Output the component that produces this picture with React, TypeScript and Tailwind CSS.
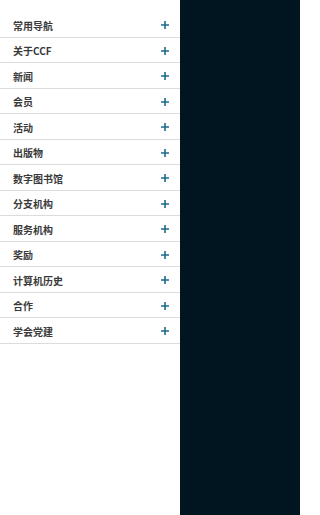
import React from 'react';

const items = [
  '常用导航',
  '关于CCF',
  '新闻',
  '会员',
  '活动',
  '出版物',
  '数字图书馆',
  '分支机构',
  '服务机构',
  '奖励',
  '计算机历史',
  '合作',
  '学会党建',
];

export default function App() {
  return (
    <div className="flex h-[515px] w-[300px] overflow-hidden bg-[#011520]">
      <div className="h-full w-[180px] bg-white pt-[12px]">
        <ul>
          {items.map((name) => (
            <li
              key={name}
              className="flex h-[25.5px] items-center justify-between border-b border-[#dcdcdc] pl-[13px] pr-[11px] pt-[2px]"
            >
              <span
                className="text-[10px] font-semibold text-[#3a3a3a]"
                style={{ fontFamily: '"Noto Sans CJK SC", "Noto Sans", sans-serif' }}
              >
                {name}
              </span>
              <svg width="8" height="8" viewBox="0 0 8 8" className="shrink-0">
                <path d="M4 0v8M0 4h8" stroke="#1e6b8a" strokeWidth="1.6" />
              </svg>
            </li>
          ))}
        </ul>
      </div>
      <div className="flex-1" />
    </div>
  );
}
